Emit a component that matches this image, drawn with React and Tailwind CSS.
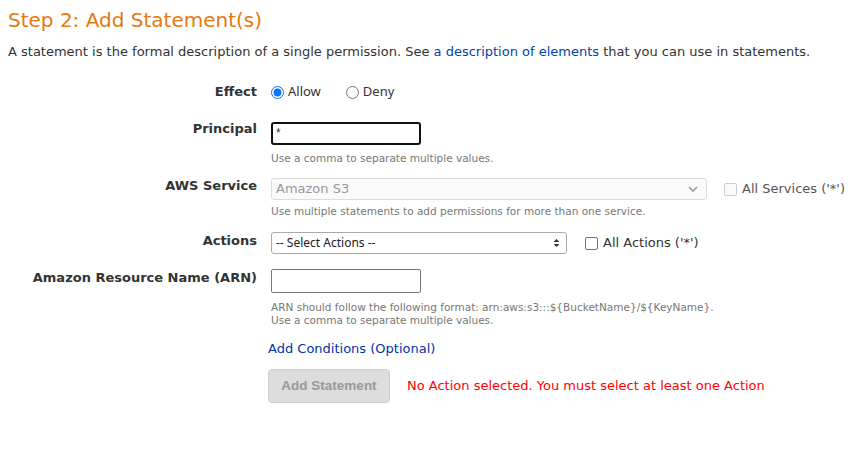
import React from 'react';

const Label = ({ children, className = '' }) => (
  <div className={`text-right font-bold text-[13px] text-[#333] ${className}`}>{children}</div>
);

const Hint = ({ children }) => (
  <div className="text-[10.5px] leading-[13px] text-[#777]">{children}</div>
);

const App = () => {
  return (
    <div className="w-[866px] h-[451px] bg-white font-['DejaVu_Sans',Verdana,sans-serif] text-[#333] px-2 pt-[7px]">
      <h2 className="text-[20px] leading-[26px] text-[#e47911]">Step 2: Add Statement(s)</h2>
      <p className="text-[13px] leading-[18px] mt-[10px]">
        A statement is the formal description of a single permission. See{' '}
        <a className="text-[#0044aa]">a description of elements</a> that you can use in statements.
      </p>

      <div className="grid grid-cols-[249px_1fr] gap-x-[14px] mt-[22px]">
        {/* Effect */}
        <Label className="leading-[18px]">Effect</Label>
        <div className="flex items-center h-[18px] font-['Noto_Sans',sans-serif] text-[13px] text-[#333]">
          <label className="flex items-center gap-[4px]">
            <input type="radio" name="effect" defaultChecked className="m-0 w-[13px] h-[13px] accent-[#0075ff]" />
            Allow
          </label>
          <label className="flex items-center gap-[4px] ml-[25px]">
            <input type="radio" name="effect" className="m-0 w-[13px] h-[13px]" />
            Deny
          </label>
        </div>

        {/* Principal */}
        <Label className="mt-[19px] leading-[18px]">Principal</Label>
        <div className="mt-[21px]">
          <div className="w-[150px] h-[23px] border-2 border-[#111] rounded-[3px] px-[3px] font-['Liberation_Sans',Arial,sans-serif] text-[12px] leading-[18px] text-[#333]">*</div>
          <div className="mt-[7px]"><Hint>Use a comma to separate multiple values.</Hint></div>
        </div>

        {/* AWS Service */}
        <Label className="mt-[12px] leading-[18px]">AWS Service</Label>
        <div className="mt-[13px]">
          <div className="flex items-center">
            <div className="w-[436px] h-[22px] border border-[#ddd] rounded-[3px] bg-[#fafafa] flex items-center justify-between pl-[4px] pr-[8px] text-[13px] text-[#999]">
              <span>Amazon S3</span>
              <svg width="10" height="6" viewBox="0 0 10 6">
                <path d="M1 1l4 4 4-4" stroke="#999" strokeWidth="1.6" fill="none" />
              </svg>
            </div>
            <div className="w-[13px] h-[13px] border border-[#ccc] rounded-[2px] bg-[#fafafa] ml-[17px]" />
            <span className="ml-[5px] text-[13px] text-[#555]">All Services ('*')</span>
          </div>
          <div className="mt-[5px]"><Hint>Use multiple statements to add permissions for more than one service.</Hint></div>
        </div>

        {/* Actions */}
        <Label className="mt-[14px] leading-[18px]">Actions</Label>
        <div className="mt-[14px] flex items-center">
          <div className="w-[296px] h-[22px] border border-[#aaa] rounded-[3px] flex items-center justify-between pl-[4px] pr-[6px] font-['Noto_Sans',sans-serif] text-[12px] text-[#222]">
            <span>-- Select Actions --</span>
            <svg width="7" height="10" viewBox="0 0 7 10">
              <path d="M0.5 4L3.5 1 6.5 4z M0.5 6L3.5 9 6.5 6z" fill="#333" />
            </svg>
          </div>
          <div className="w-[13px] h-[13px] border border-[#767676] rounded-[2px] bg-white ml-[18px]" />
          <span className="ml-[5px] text-[13px] text-[#333]">All Actions ('*')</span>
        </div>

        {/* ARN */}
        <Label className="mt-[15px] leading-[18px]">Amazon Resource Name (ARN)</Label>
        <div className="mt-[15px]">
          <div className="w-[150px] h-[24px] border border-[#777] rounded-[2px]" />
          <div className="mt-[8px]">
            <Hint>ARN should follow the following format: arn:aws:s3:::${'{'}BucketName{'}'}/${'{'}KeyName{'}'}.</Hint>
            <Hint>Use a comma to separate multiple values.</Hint>
          </div>
        </div>

        <div />
        <div className="-ml-[3px] mt-[9px]">
          <a className="text-[13px] leading-[18px] text-[#0033aa]">Add Conditions (Optional)</a>
          <div className="flex items-center mt-[9px]">
            <button className="w-[122px] h-[34px] bg-[#dddddd] border border-[#ccc] rounded-[4px] font-['Liberation_Sans',Arial,sans-serif] text-[13.5px] font-bold text-[#999]">
              Add Statement
            </button>
            <span className="ml-[17px] text-[13px] text-[#ff0000]">No Action selected. You must select at least one Action</span>
          </div>
        </div>
      </div>
    </div>
  );
};

export default App;
